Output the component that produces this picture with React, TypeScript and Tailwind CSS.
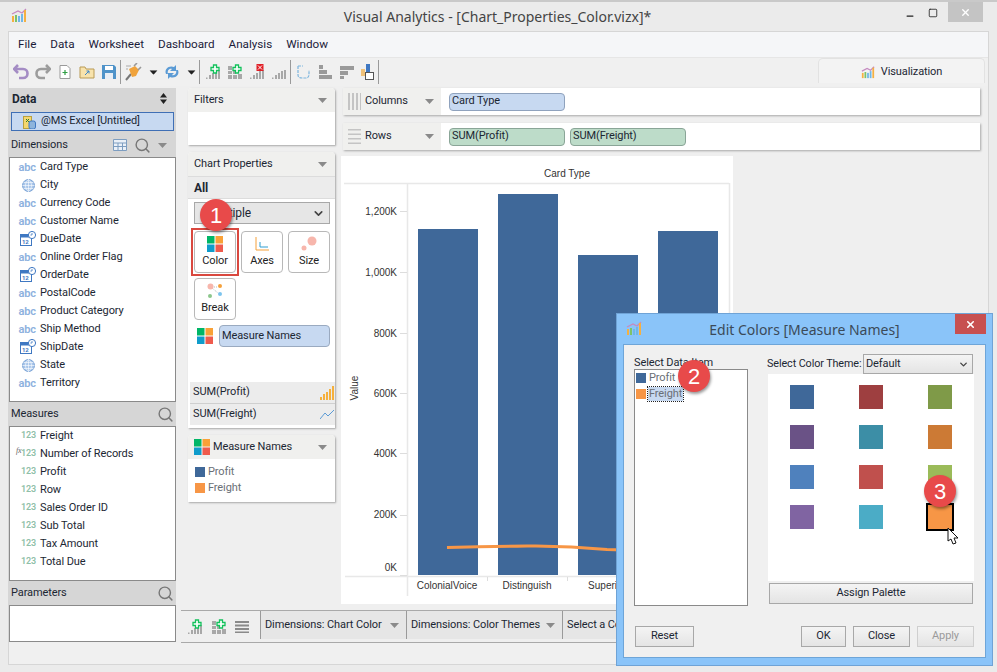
import React from 'react';
import { ChevronDown, Minus, Search, Square, X } from 'lucide-react';

const Caret = ({ className = 'text-[#8a8a8a]' }: { className?: string }) => (
  <svg width="9" height="5" viewBox="0 0 10 6" preserveAspectRatio="none" className={className}>
    <path d="M0 0h10L5 6z" fill="currentColor" />
  </svg>
);

const Logo = ({ size = 16 }: { size?: number }) => (
  <svg width={size} height={size} viewBox="0 0 16 16">
    <path d="M1 7l6-3 4 2 4-4" fill="none" stroke="#c58ac0" strokeWidth="1.3" />
    <rect x="1" y="9" width="2" height="6" fill="#f5b041" />
    <rect x="4" y="8" width="2" height="7" fill="#7cc36a" />
    <rect x="7" y="9" width="2" height="6" fill="#6fb7e8" />
    <rect x="10" y="7" width="2" height="8" fill="#6fb7e8" />
    <rect x="13" y="3" width="2" height="12" fill="#f5b041" />
  </svg>
);

const Colors = ({ size = 16 }: { size?: number }) => (
  <svg width={size} height={size} viewBox="0 0 16 16">
    <rect width="7.5" height="7.5" fill="#00b667" />
    <rect x="8.5" width="7.5" height="7.5" fill="#f9a137" />
    <rect y="8.5" width="7.5" height="7.5" fill="#0f9ccb" />
    <rect x="8.5" y="8.5" width="7.5" height="7.5" fill="#ef5b4d" />
  </svg>
);

const Bars = ({ badge, grid }: { badge?: 'plus' | 'x'; grid?: boolean }) => (
  <svg width="16" height="16" viewBox="0 0 16 16">
    {grid ? (
      <path d="M1 2h4v4H1zM1 7h4v3H1zM6 7h3v3H6zM11 10h4v1h-4zM1 11h4v4H1zM6 11h4v4H6zM11 11h4v4h-4z" fill="#a8a8a8" />
    ) : (
      <path d="M1 13.5h1.5V15H1zM4 11h2v4H4zM7 9h2v6H7zM10 7h2v8h-2zM13 6h2v9h-2z" fill="#a8a8a8" />
    )}
    {badge === 'plus' && <path d="M8.5 1h3v2.5H14v3h-2.5V9h-3V6.5H6v-3h2.5z" fill="#fff" stroke="#12c15b" strokeWidth="1.3" />}
    {badge === 'x' && (
      <g>
        <rect x="7.5" y="0" width="7" height="7" fill="#e01f26" />
        <path d="M9 1.5l4 4M13 1.5l-4 4" stroke="#fff" />
      </g>
    )}
  </svg>
);

const Sep = () => <div className="w-px h-[24px] bg-[#9a9a9a] mx-[3px]" />;

const DateIcon = () => (
  <svg width="16" height="16" viewBox="0 0 16 16">
    <rect x="0.5" y="3.5" width="11" height="11" fill="#fff" stroke="#3f78c2" />
    <rect x="0.5" y="3.5" width="11" height="3" fill="#3f78c2" />
    <text x="2" y="13" fontSize="6" fill="#3f78c2" fontWeight="700">12</text>
    <circle cx="12" cy="4" r="3.6" fill="#fff" stroke="#3f78c2" />
    <path d="M12 2v2h-1.6" fill="none" stroke="#3f78c2" strokeWidth="0.8" />
  </svg>
);

const GlobeIcon = () => (
  <svg width="13" height="13" viewBox="0 0 13 13">
    <circle cx="6.5" cy="6.5" r="6" fill="#a9c6ea" stroke="#7da5d6" />
    <path d="M0.5 6.5h12M1.5 3.5h10M1.5 9.5h10M6.5 0.5v12M6.5 0.5c-4 3-4 9 0 12M6.5 0.5c4 3 4 9 0 12" fill="none" stroke="#fff" strokeWidth="0.6" />
  </svg>
);

type Kind = 'abc' | 'globe' | 'date';

const dimensions: [Kind, string][] = [
  ['abc', 'Card Type'],
  ['globe', 'City'],
  ['abc', 'Currency Code'],
  ['abc', 'Customer Name'],
  ['date', 'DueDate'],
  ['abc', 'Online Order Flag'],
  ['date', 'OrderDate'],
  ['abc', 'PostalCode'],
  ['abc', 'Product Category'],
  ['abc', 'Ship Method'],
  ['date', 'ShipDate'],
  ['globe', 'State'],
  ['abc', 'Territory'],
];

const measures = ['Freight', 'Number of Records', 'Profit', 'Row', 'Sales Order ID', 'Sub Total', 'Tax Amount', 'Total Due'];

const SideHeader = ({ title, children }: { title: string; children?: React.ReactNode }) => (
  <div className="h-[24px] bg-[#d6d6d6] flex items-center justify-between pl-[2px] pr-[2px]">
    <span className="pt-[1px]">{title}</span>
    <div className="flex items-center gap-[7px]">{children}</div>
  </div>
);

const Card = ({ title, icon, children }: { title: string; icon?: React.ReactNode; children: React.ReactNode }) => (
  <div className="bg-white rounded-t-[4px] shadow-[1px_1px_2px_#a8a8a8]">
    <div className="h-[24px] bg-[#f0f0ee] rounded-t-[4px] flex items-center justify-between pl-[6px] pr-[8px]">
      <div className="flex items-center gap-[3px]">
        {icon}
        <span className="pt-[1px]">{title}</span>
      </div>
      <Caret />
    </div>
    {children}
  </div>
);

const MarkButton = ({ label, icon }: { label: string; icon: React.ReactNode }) => (
  <div className="w-[42px] h-[42px] bg-white border border-[#b8b8b8] rounded-[4px] flex flex-col items-center pt-[2px]">
    <div className="h-[20px] flex items-center justify-center">{icon}</div>
    <span className="leading-[14px] text-[#222]">{label}</span>
  </div>
);

const Shelf = ({ label, icon, children }: { label: string; icon: React.ReactNode; children: React.ReactNode }) => (
  <div className="h-[27px] flex bg-white shadow-[1px_1px_2px_#a8a8a8] mr-[8px] ml-[2px]">
    <div className="w-[98px] bg-[#f0f0ee] flex items-center pl-[4px]">
      <div className="w-[14px] flex justify-center">{icon}</div>
      <span className="ml-[4px] flex-1">{label}</span>
      <div className="mr-[7px]"><Caret /></div>
    </div>
    <div className="flex items-center gap-[5px] pl-[8px]">{children}</div>
  </div>
);

const DialogButton = ({ label, width, disabled }: { label: string; width: string; disabled?: boolean }) => (
  <div className={`${width} h-[21px] flex items-center justify-center border bg-[linear-gradient(#f4f4f4,#e4e4e4)] ${disabled ? 'border-[#cfcfcf] text-[#9a9a9a]' : 'border-[#a8a8a8]'}`}>
    {label}
  </div>
);

const swatches = ['#3f6899', '#9e3f40', '#7f9a48', '#6a5286', '#3c8ea6', '#cc7a35', '#4f81bd', '#c0504d', '#9bbb59', '#8064a2', '#4bacc6', '#f79646'];

const Badge = ({ n, className }: { n: number; className: string }) => (
  <div className={`absolute w-[32px] h-[32px] rounded-full bg-[#e84a4a] text-white text-[22px] font-['Liberation_Sans',sans-serif] flex items-center justify-center shadow-[1px_2px_3px_rgba(0,0,0,0.4)] ${className}`}>
    {n}
  </div>
);

const Chart = () => {
  const ticks: [string, number, number][] = [
    ['1,200K', 211, 211],
    ['1,000K', 272, 272],
    ['800K', 333, 333],
    ['600K', 393, 393],
    ['400K', 453, 453],
    ['200K', 514, 515],
    ['0K', 567, 575],
  ];
  return (
    <svg width="392" height="448" viewBox="341 156 392 448" className="font-['Liberation_Sans',sans-serif] tracking-normal">
      <rect x="341" y="156" width="392" height="448" fill="#fff" />
      <text x="567" y="177" fontSize="10" fill="#333" textAnchor="middle">Card Type</text>
      <path d="M344 183.5h385M407.5 183v413M729.5 183v394M345 576.5h384" fill="none" stroke="#e8e8e8" strokeWidth="1.5" />
      <path d="M487.5 577v4M567.5 577v4M647.5 577v4" stroke="#ddd" />
      {ticks.map(([label, y, t]) => (
        <g key={label}>
          <text x="397" y={y + 4} fontSize="10" fill="#333" textAnchor="end">{label}</text>
          <path d={`M400 ${t}.5h7`} stroke="#ddd" />
        </g>
      ))}
      <text transform="translate(358 388) rotate(-90)" fontSize="10" fill="#333" textAnchor="middle">Value</text>
      <rect x="418" y="229" width="60" height="346" fill="#3f6899" />
      <rect x="498" y="194" width="60" height="381" fill="#3f6899" />
      <rect x="578" y="255" width="60" height="320" fill="#3f6899" />
      <rect x="658" y="231" width="60" height="344" fill="#3f6899" />
      <path d="M447 547.5Q487 546.5 527 546T607 549.5L687 552" fill="none" stroke="#f79646" strokeWidth="3" />
      <text x="447" y="589" fontSize="10" fill="#333" textAnchor="middle">ColonialVoice</text>
      <text x="527" y="589" fontSize="10" fill="#333" textAnchor="middle">Distinguish</text>
      <text x="607" y="589" fontSize="10" fill="#333" textAnchor="middle">Superior</text>
    </svg>
  );
};

export default function App() {
  return (
    <div className="relative w-[997px] h-[672px] overflow-hidden bg-[#ebebeb] border-t-2 border-[#c9c9c9] text-[11px] tracking-[-0.1px] text-[#1c2733] font-['Roboto',sans-serif] flex flex-col whitespace-nowrap">
      {/* title bar */}
      <div className="h-[29px] shrink-0 relative flex items-center justify-center font-['Noto_Sans',sans-serif] tracking-normal">
        <div className="absolute left-[11px] top-[5px]"><Logo /></div>
        <span className="text-[14px] text-[#444] pr-[2px]">Visual Analytics - [Chart_Properties_Color.vizx]*</span>
        <div className="absolute right-[14px] top-0 flex items-start">
          <Minus size={10} strokeWidth={3} className="mt-[9px] mr-[13px] text-[#222]" />
          <Square size={10} strokeWidth={2} className="mt-[6px] mr-[10px] text-[#222]" />
          <div className="w-[35px] h-[20px] bg-[#c4c4c4] flex items-center justify-center text-white"><X size={11} strokeWidth={3} /></div>
        </div>
      </div>

      {/* window */}
      <div className="flex-1 mx-[8px] mb-[7px] border border-[#d6d6d6] flex flex-col min-h-0">
        <div className="h-[25px] bg-[#f5f6f8] flex items-center gap-[14px] pl-[9px] text-[#1c1c3a] text-[11.7px] tracking-normal">
          {['File', 'Data', 'Worksheet', 'Dashboard', 'Analysis', 'Window'].map(m => <span key={m}>{m}</span>)}
        </div>

        {/* toolbar */}
        <div className="h-[29px] bg-[#f0f0f0] border-t border-[#e6e6e6] flex items-center pl-[4px] relative">
          <div className="flex items-center gap-[6px]">
            <svg width="16" height="16" viewBox="0 0 16 16"><path d="M5 1L1 5l4 4M1 5h9c6 0 6 9 0 9H6" fill="none" stroke="#a48cc4" strokeWidth="2.6" /></svg>
            <svg width="16" height="16" viewBox="0 0 16 16"><path d="M11 1l4 4-4 4M15 5H6c-6 0-6 9 0 9h4" fill="none" stroke="#9c9c9c" strokeWidth="2.6" /></svg>
            <svg width="16" height="16" viewBox="0 0 16 16"><path d="M3 1.5h7l3 3v10H3z" fill="#fff" stroke="#9a9a9a" /><path d="M8 6v5M5.5 8.5h5" stroke="#2f9e44" strokeWidth="1.2" /></svg>
            <svg width="16" height="16" viewBox="0 0 16 16"><path d="M1 3h5l1 2h8v9H1z" fill="#f8e3ac" stroke="#b99a55" /><path d="M6 11l4-4M7.5 7H10v2.5" fill="none" stroke="#3d85c6" /></svg>
            <svg width="16" height="16" viewBox="0 0 16 16"><path d="M1 1h12l2 2v12H1z" fill="#4f93c9" /><rect x="4" y="2" width="8" height="4" fill="#fff" /><rect x="4" y="9" width="8" height="6" fill="#e8eef5" /></svg>
          </div>
          <Sep />
          <svg width="17" height="18" viewBox="0 0 17 18" className="ml-[1px]"><path d="M1 17l5-6" stroke="#777" strokeWidth="2" /><path d="M4 6l6-3 4 4-3 6-4 1z" fill="#f0a33c" /><path d="M9 3l3-3M13 7l3-3" stroke="#999" strokeWidth="1.6" /><path d="M1 3h5M1 6h2" stroke="#aaa" /></svg>
          <div className="ml-[7px]"><Caret className="text-[#222] scale-90" /></div>
          <svg width="16" height="16" viewBox="0 0 16 16" className="ml-[6px]"><path d="M2 10c-2-5 3-9 8-7l2-2v6H6l2-2c-3-1-5 2-4 5zM14 6c2 5-3 9-8 7l-2 2V9h6l-2 2c3 1 5-2 4-5z" fill="#5b9bd5" /></svg>
          <div className="ml-[7px]"><Caret className="text-[#222] scale-90" /></div>
          <Sep />
          <div className="flex items-center gap-[6px] ml-[2px]">
            <Bars badge="plus" />
            <Bars badge="plus" grid />
            <Bars badge="x" />
            <Bars />
          </div>
          <Sep />
          <div className="flex items-center gap-[6px] ml-[1px]">
            <svg width="16" height="16" viewBox="0 0 16 16"><path d="M3 2h5M3 2v9c0 3 3 3 5 3h3c3 0 3-3 3-5V6" fill="none" stroke="#7db5de" strokeWidth="1.2" strokeDasharray="3 1" /></svg>
            <svg width="16" height="16" viewBox="0 0 16 16"><path d="M2 1h4v4H2zM2 6h8v4H2zM2 11h13v4H2z" fill="#9a9a9a" /></svg>
            <svg width="16" height="16" viewBox="0 0 16 16"><path d="M1 2h14v4H1zM1 7h8v4H1zM1 12h4v3H1z" fill="#9a9a9a" /></svg>
            <svg width="14" height="16" viewBox="0 0 14 16"><rect x="0" y="5" width="4" height="7" fill="#f0c27a" /><rect x="5" y="0" width="4" height="9" fill="#3f78c2" /><rect x="4.5" y="8.5" width="8" height="7" fill="#fff" stroke="#555" /></svg>
          </div>
          <Sep />
          <div className="absolute right-[3px] top-0 bottom-[3px] w-[167px] bg-[#f3f3f3] border border-b-0 border-[#e2e2e2] rounded-t-[5px] flex items-center justify-center gap-[6px] pt-[2px]">
            <Logo size={14} />
            <span>Visualization</span>
          </div>
        </div>

        {/* body */}
        <div className="flex-1 flex min-h-0 bg-[#efefef]">
          {/* data pane */}
          <div className="w-[167px] pt-[2px] shrink-0 flex flex-col">
            <div className="h-[22px] bg-[#d6d6d6] flex items-center justify-between pl-[3px] pr-[9px] pb-[1px] text-[12px] font-bold">
              <span>Data</span>
              <svg width="7" height="11" viewBox="0 0 7 11"><path d="M0 4.5L3.5 0 7 4.5zM0 6.5L3.5 11 7 6.5z" fill="#222" /></svg>
            </div>
            <div className="h-[23px] bg-[#d6d6d6] px-[2px] py-[2px]">
              <div className="h-[19px] bg-[#c7d9f1] border border-[#3f6fb5] flex items-center pl-[11px] gap-[5px]">
                <svg width="13" height="14" viewBox="0 0 13 14"><rect x="0.5" y="1.5" width="8" height="12" fill="#f5d76e" stroke="#b8a040" /><path d="M3 4l3 3M6 4L3 7" stroke="#2e7d32" /><rect x="6" y="6" width="6.5" height="8" rx="2" fill="#8db4dc" stroke="#3f78c2" /></svg>
                <span>@MS Excel [Untitled]</span>
              </div>
            </div>
            <SideHeader title="Dimensions">
              <svg width="14" height="12" viewBox="0 0 14 12"><path d="M0.5 0.5h13v11H0.5zM0.5 4h13M0.5 7.5h13M5 4v7.5M9.5 4v7.5" fill="#eaf0f8" stroke="#7d9dc0" /></svg>
              <Search size={17} strokeWidth={2} className="text-[#777]" />
              <div className="mr-[7px]"><Caret /></div>
            </SideHeader>
            <div className="h-[245px] bg-white border border-[#8a8a8a]">
              {dimensions.map(([kind, name]) => (
                <div key={name} className="h-[18px] flex items-center">
                  <div className="w-[28px] flex justify-end pr-[2px] items-center">
                    {kind === 'abc' && <span className="text-[#8db1de] font-semibold text-[11px] leading-none">abc</span>}
                    {kind === 'globe' && <div className="pr-[1px]"><GlobeIcon /></div>}
                    {kind === 'date' && <DateIcon />}
                  </div>
                  <span className="ml-[2px]">{name}</span>
                </div>
              ))}
            </div>
            <SideHeader title="Measures"><Search size={17} strokeWidth={2} className="text-[#777]" /></SideHeader>
            <div className="h-[155px] bg-white border border-[#8a8a8a]">
              {measures.map(name => (
                <div key={name} className="h-[18px] flex items-center relative">
                  <div className="w-[26px] text-right text-[9px] font-semibold text-[#8fbfa8]">123</div>
                  {name === 'Number of Records' && <span className="absolute left-[6px] top-0 text-[8px] italic text-[#666] font-['Liberation_Serif',serif]">fx</span>}
                  <span className="ml-[4px]">{name}</span>
                </div>
              ))}
            </div>
            <SideHeader title="Parameters"><Search size={17} strokeWidth={2} className="text-[#777]" /></SideHeader>
            <div className="h-[37px] bg-white border border-[#8a8a8a]" />
          </div>

          <div className="flex-1 flex flex-col min-w-0">
            <div className="flex-1 flex min-h-0">
              {/* cards column */}
              <div className="w-[147px] ml-[12px] pt-[2px] shrink-0 flex flex-col gap-[7px]">
                <Card title="Filters"><div className="h-[33px]" /></Card>
                <Card title="Chart Properties">
                  <div className="h-[252px] relative">
                    <div className="h-[23px] bg-[#ececec] border-y border-[#dcdcdc] flex items-center pl-[6px] font-bold text-[12px]">All</div>
                    <div className="ml-[6px] mr-[5px] mt-[3px] h-[22px] bg-[#e6e6e6] border border-[#a8a8a8] flex items-center justify-between pl-[14px] pr-[4px] text-[12px]">
                      <span>Multiple</span>
                      <ChevronDown size={13} strokeWidth={3} className="text-[#444]" />
                    </div>
                    <div className="ml-[6px] mr-[5px] mt-[7px] flex flex-wrap gap-[5px]">
                      <div className="outline-2 outline-offset-[1px] outline-[#d9483f]">
                        <MarkButton label="Color" icon={<Colors />} />
                      </div>
                      <MarkButton label="Axes" icon={<svg width="14" height="14" viewBox="0 0 14 14"><path d="M1 0v13h13" fill="none" stroke="#f5a13a" /><path d="M5 5v5h8" fill="none" stroke="#2f9ed1" /></svg>} />
                      <MarkButton label="Size" icon={<svg width="16" height="16" viewBox="0 0 16 16"><circle cx="11" cy="5" r="4.5" fill="#f7b6ac" /><circle cx="3" cy="12" r="2.5" fill="#f7b6ac" /></svg>} />
                      <MarkButton label="Break" icon={<svg width="16" height="16" viewBox="0 0 16 16"><path d="M5 5l6 5M7 4h4" stroke="#bbb" strokeDasharray="1 1" /><circle cx="3.5" cy="3.5" r="3" fill="#f7b6ac" /><circle cx="13" cy="3" r="2" fill="#f5a13a" /><circle cx="3" cy="13" r="2" fill="#8cc78c" /><circle cx="13" cy="11" r="2" fill="#7cc4ee" /></svg>} />
                    </div>
                    <div className="ml-[9px] mt-[5px] flex items-center gap-[6px]">
                      <Colors />
                      <div className="w-[111px] h-[22px] bg-[#c7d9f1] border border-[#9aaac0] rounded-[4px] flex items-center pl-[2px] pt-[1px]">Measure Names</div>
                    </div>
                    <div className="absolute left-[2px] right-0 bottom-[3px]">
                      <div className="h-[22px] bg-[#ececec] border-b border-[#cfcfcf] flex items-center justify-between pl-[3px]">
                        <span>SUM(Profit)</span>
                        <svg width="15" height="14" viewBox="0 0 15 14"><path d="M0 11h2v3H0zM3 8h2v6H3zM6 6h2v8H6zM9 3h2v11H9zM12 0h2v14h-2z" fill="#f5b03c" /></svg>
                      </div>
                      <div className="h-[21px] bg-[#ececec] flex items-center justify-between pl-[3px]">
                        <span>SUM(Freight)</span>
                        <svg width="15" height="11" viewBox="0 0 15 11"><path d="M0 10l5-6 3 3 6-6" fill="none" stroke="#5b9bd5" /></svg>
                      </div>
                    </div>
                  </div>
                </Card>
                <Card title="Measure Names" icon={<Colors />}>
                  <div className="h-[43px] pl-[7px] pt-[5px] text-[#6a6f76]">
                    <div className="h-[16px] flex items-center gap-[3px]"><div className="w-[10px] h-[10px] bg-[#3f6899]" />Profit</div>
                    <div className="h-[16px] flex items-center gap-[3px]"><div className="w-[10px] h-[10px] bg-[#f79646]" />Freight</div>
                  </div>
                </Card>
              </div>

              {/* shelves and chart */}
              <div className="flex-1 min-w-0 ml-[6px] pt-[2px] flex flex-col">
                <div className="flex flex-col gap-[8px]">
                  <Shelf label="Columns" icon={<svg width="13" height="17" viewBox="0 0 13 17"><path d="M0 0h2v17H0zM4 0h2v17H4zM8 0h2v17H8zM12 0h1v17h-1z" fill="#c4c4c4" /></svg>}>
                    <div className="w-[116px] h-[18px] bg-[#c7d9f1] border border-[#8fa2bd] rounded-[4px] flex items-center pl-[2px]">Card Type</div>
                  </Shelf>
                  <Shelf label="Rows" icon={<svg width="13" height="15" viewBox="0 0 13 15"><path d="M0 0h13v1.5H0zM0 4.500h13V6H0zM0 9h13v1.500H0zM0 13.500h13V15H0z" fill="#c4c4c4" /></svg>}>
                    <div className="w-[116px] h-[18px] bg-[#bddcc9] border border-[#8aa597] rounded-[4px] flex items-center pl-[2px]">SUM(Profit)</div>
                    <div className="w-[116px] h-[18px] bg-[#bddcc9] border border-[#8aa597] rounded-[4px] flex items-center pl-[2px]">SUM(Freight)</div>
                  </Shelf>
                </div>
                <div className="mt-[6px]"><Chart /></div>
              </div>
            </div>

            {/* bottom tabs */}
            <div className="h-[33px] ml-[5px] shrink-0 border-y border-[#a9a9a9] flex">
              <div className="w-[79px] flex items-center pl-[6px] gap-[8px]">
                <Bars badge="plus" />
                <Bars badge="plus" grid />
                <svg width="15" height="12" viewBox="0 0 15 12"><path d="M0 0h14v2H0zM0 3.500h14v2H0zM0 7h14v2H0zM0 10.500h14V12H0z" fill="#8a8a8a" /></svg>
              </div>
              <div className="flex-1 h-[28px] bg-[#e6e6e6] flex items-center">
                <div className="w-[146px] h-full border-l border-[#9a9a9a] flex items-center justify-between pl-[4px] pr-[7px]"><span>Dimensions: Chart Color</span><Caret /></div>
                <div className="w-[156px] h-full border-l border-[#9a9a9a] flex items-center justify-between pl-[4px] pr-[7px]"><span>Dimensions: Color Themes</span><Caret /></div>
                <div className="flex-1 h-full border-l border-[#9a9a9a] flex items-center pl-[4px]"><span>Select a Color</span></div>
              </div>
            </div>
          </div>
        </div>

        <div className="h-[21px] shrink-0 bg-[#f0f0f0]" />
      </div>

      {/* Edit Colors dialog */}
      <div className="absolute left-[616px] top-[311px] w-[377px] h-[353px] bg-[#8ac4f9] border border-[#6fa3d6] flex flex-col px-[6px] pb-[7px]">
        <div className="h-[30px] shrink-0 relative flex items-center justify-center text-[14px] text-[#3b4a58] font-['Noto_Sans',sans-serif] tracking-normal">
          <div className="absolute left-[3px] top-[6px]"><Logo /></div>
          <span>Edit Colors [Measure Names]</span>
          <div className="absolute right-0 top-0 w-[31px] h-[20px] bg-[#c75050] flex items-center justify-center text-white"><X size={11} strokeWidth={3.5} /></div>
        </div>
        <div className="flex-1 bg-[#f0f0f0] border border-[#6ea5d8] pt-[10px] px-[10px] flex flex-col">
          <div className="flex flex-1 min-h-0">
            <div className="w-[114px] flex flex-col">
              <div className="pt-[1px] leading-[13px] h-[14px]">Select Data Item</div>
              <div className="h-[237px] bg-white border border-[#8a8a8a] pl-[1px] text-[#6a6f76]">
                <div className="h-[16px] flex items-center gap-[3px]"><div className="w-[10px] h-[10px] bg-[#3f6899]" /><span>Profit</span></div>
                <div className="h-[16px] flex items-center gap-[2px]"><div className="w-[10px] h-[10px] bg-[#f79646]" /><span className="bg-[#c7d9f1] outline-1 outline-dotted outline-[#222] px-[1px] leading-[14px]">Freight</span></div>
              </div>
            </div>
            <div className="w-[206px] ml-[20px] -mt-[1px] flex flex-col">
              <div className="h-[20px] flex items-center">
                <span className="w-[96px] shrink-0 -ml-[1px] text-[10.8px]">Select Color Theme:</span>
                <div className="w-[110px] h-[20px] bg-[linear-gradient(#f4f4f4,#e4e4e4)] border border-[#a8a8a8] flex items-center justify-between pl-[2px] pr-[3px]">
                  <span>Default</span>
                  <ChevronDown size={11} strokeWidth={3} className="text-[#444]" />
                </div>
              </div>
              <div className="h-[207px] bg-white pt-[11px]">
                <div className="grid grid-cols-3 gap-y-[16px] justify-items-center w-[206px]">
                  {swatches.map(c => (
                    <div key={c} className={`w-[24px] h-[24px] ${c === '#f79646' ? 'outline-2 outline-black' : ''}`} style={{ backgroundColor: c }} />
                  ))}
                </div>
              </div>
              <div className="mt-[2px] mx-[1px] h-[21px] flex items-center justify-center border border-[#a8a8a8] bg-[linear-gradient(#f4f4f4,#e4e4e4)]">Assign Palette</div>
            </div>
          </div>
          <div className="h-[21px] shrink-0 flex justify-between items-start mb-[10px] pl-[1px] pr-[1px]">
            <DialogButton label="Reset" width="w-[59px]" />
            <div className="flex gap-[7px]">
              <DialogButton label="OK" width="w-[45px]" />
              <DialogButton label="Close" width="w-[57px]" />
              <DialogButton label="Apply" width="w-[57px]" disabled />
            </div>
          </div>
        </div>
      </div>

      <Badge n={1} className="left-[200px] top-[197px]" />
      <Badge n={2} className="left-[678px] top-[358px]" />
      <Badge n={3} className="left-[924px] top-[473px]" />
      <svg width="13" height="19" viewBox="0 0 13 19" className="absolute left-[947px] top-[525px]">
        <path d="M1 1v13l3-2 2 5 3-1-2-5h4z" fill="#fff" stroke="#111" />
      </svg>
    </div>
  );
}
